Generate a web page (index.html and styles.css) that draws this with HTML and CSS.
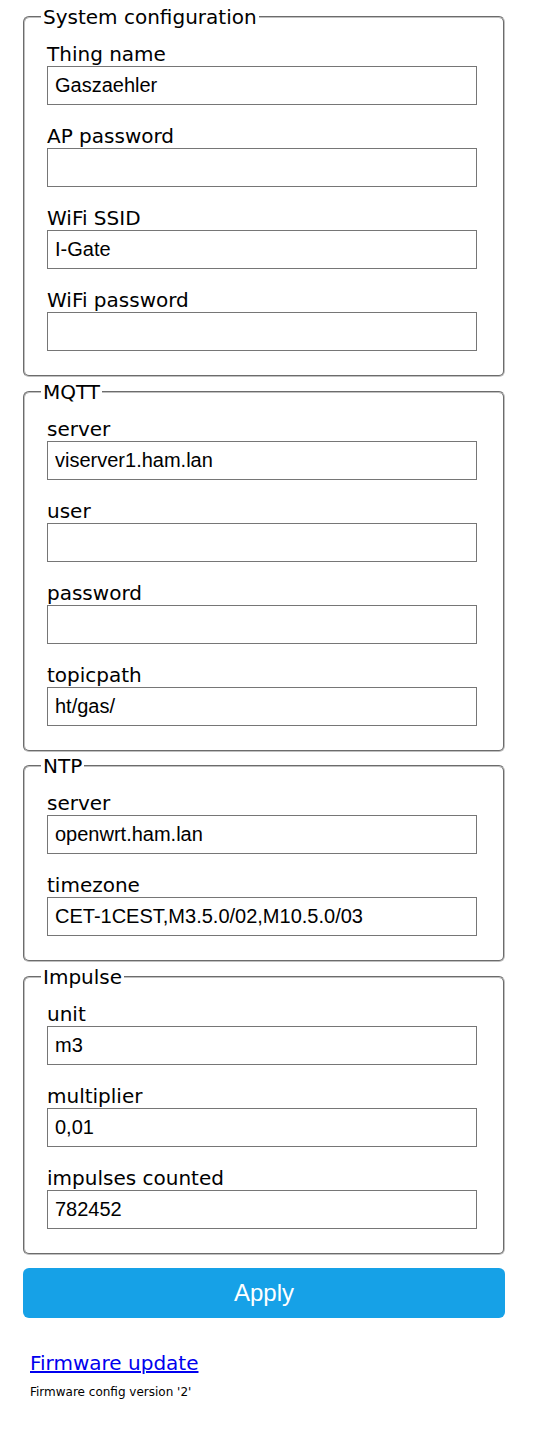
FILE: index.html
```html
<!DOCTYPE html>
<html>
<head>
<meta charset="utf-8">
<title>Gaszaehler</title>
<link rel="stylesheet" href="styles.css">
</head>
<body>
<div class="page">
<form class="config">
  <fieldset class="group">
    <legend class="group-title">System configuration</legend>
    <div class="field"><label class="field-label">Thing name</label><input class="field-input" type="text" value="Gaszaehler"></div>
    <div class="field"><label class="field-label">AP password</label><input class="field-input" type="password" value=""></div>
    <div class="field"><label class="field-label">WiFi SSID</label><input class="field-input" type="text" value="I-Gate"></div>
    <div class="field"><label class="field-label">WiFi password</label><input class="field-input" type="password" value=""></div>
  </fieldset>
  <fieldset class="group">
    <legend class="group-title">MQTT</legend>
    <div class="field"><label class="field-label">server</label><input class="field-input" type="text" value="viserver1.ham.lan"></div>
    <div class="field"><label class="field-label">user</label><input class="field-input" type="text" value=""></div>
    <div class="field"><label class="field-label">password</label><input class="field-input" type="password" value=""></div>
    <div class="field"><label class="field-label">topicpath</label><input class="field-input" type="text" value="ht/gas/"></div>
  </fieldset>
  <fieldset class="group">
    <legend class="group-title">NTP</legend>
    <div class="field"><label class="field-label">server</label><input class="field-input" type="text" value="openwrt.ham.lan"></div>
    <div class="field"><label class="field-label">timezone</label><input class="field-input" type="text" value="CET-1CEST,M3.5.0/02,M10.5.0/03"></div>
  </fieldset>
  <fieldset class="group">
    <legend class="group-title">Impulse</legend>
    <div class="field"><label class="field-label">unit</label><input class="field-input" type="text" value="m3"></div>
    <div class="field"><label class="field-label">multiplier</label><input class="field-input" type="text" value="0,01"></div>
    <div class="field"><label class="field-label">impulses counted</label><input class="field-input" type="text" value="782452"></div>
  </fieldset>
  <button class="apply" type="button">Apply</button>
</form>
<div class="footer">
  <a class="fw-link" href="#">Firmware update</a>
  <div class="fw-version">Firmware config version '2'</div>
</div>
</div>
</body>
</html>
```
FILE: styles.css
```css
html, body {
  margin: 0;
  padding: 0;
  background: #ffffff;
}
body {
  font-family: "DejaVu Sans", Verdana, sans-serif;
  color: #000000;
}
.page {
  padding: 5px 0 0 23px;
  width: 482px;
}
.config {
  margin: 0;
}
.group {
  margin: 0 0 2.5px 0;
  padding: 14px 0 4px 22px;
  border: 2px groove #c0c0c0;
  border-radius: 6px;
  min-width: 0;
  box-sizing: border-box;
  width: 482px;
}
.group-title {
  font-size: 20px;
  line-height: 24px;
  padding: 0 2px;
  margin-left: -6px;
}
.field {
  margin-bottom: 20px;
}
.field-label {
  display: block;
  font-size: 20px;
  line-height: 23px;
  padding-top: 1px;
  margin-top: -1px;
}
.field-input {
  display: block;
  box-sizing: border-box;
  width: 430px;
  height: 39px;
  margin: 0;
  padding: 0 7px;
  border: 1px solid #767676;
  border-radius: 0;
  font-family: "Liberation Sans", Arial, sans-serif;
  font-size: 20px;
  color: #000000;
  background: #ffffff;
}
.apply {
  display: block;
  margin-top: 13.5px;
  width: 482px;
  height: 50px;
  border: 0;
  border-radius: 6px;
  background-color: #16a1e7;
  color: #ffffff;
  font-family: "Liberation Sans", Arial, sans-serif;
  font-size: 24px;
  line-height: 50px;
  padding: 0;
}
.footer {
  padding: 33px 0 0 7px;
}
.fw-link {
  display: block;
  width: max-content;
  font-size: 20px;
  line-height: 24px;
  color: #0000ee;
  text-decoration: underline;
}
.fw-version {
  margin-top: 10px;
  font-size: 12px;
  line-height: 15px;
}
```
